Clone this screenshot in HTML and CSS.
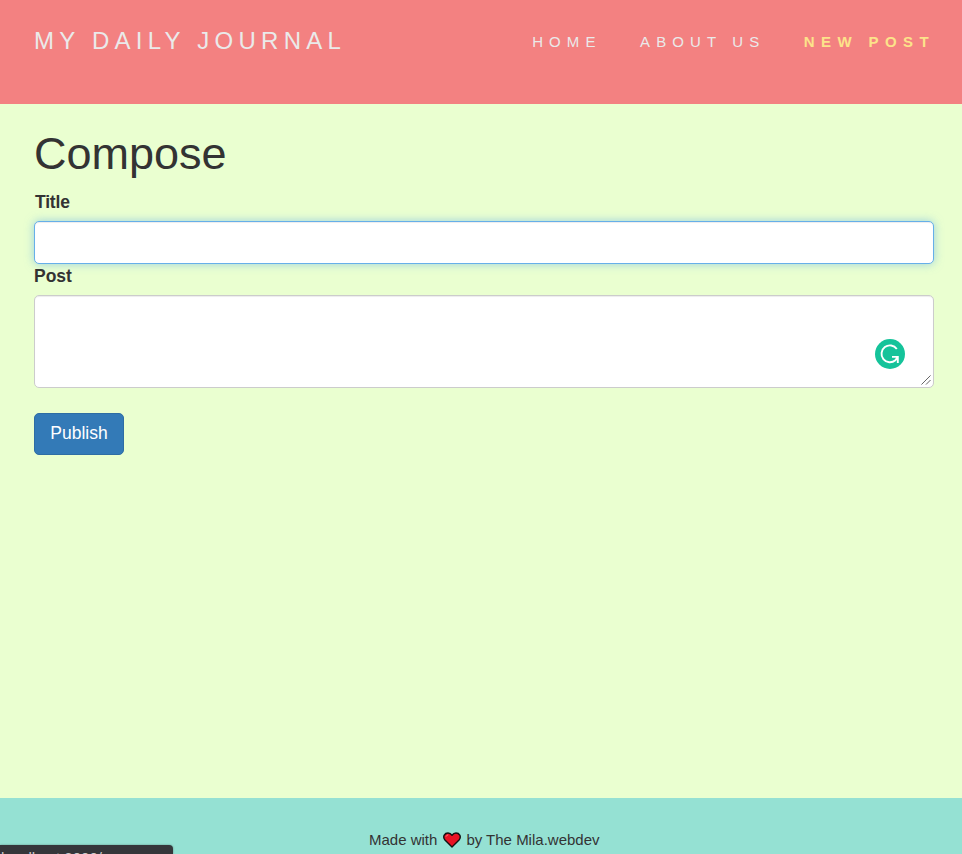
FILE: index.html
```html
<!DOCTYPE html>
<html lang="en">
<head>
<meta charset="utf-8">
<title>Daily Journal</title>
<link rel="stylesheet" href="styles.css">
</head>
<body>
<nav class="navbar">
  <a class="brand">MY DAILY JOURNAL</a>
  <ul class="nav">
    <li><a>HOME</a></li>
    <li><a>ABOUT US</a></li>
    <li class="active"><a>NEW POST</a></li>
  </ul>
</nav>
<main class="container">
  <h1>Compose</h1>
  <form>
    <div class="form-group">
      <label class="label-title" for="title">Title</label>
      <input class="control focused" id="title" type="text">
      <label for="post">Post</label>
      <div class="editor">
        <textarea class="control" id="post"></textarea>
        <svg class="badge" viewBox="0 0 30 30"><circle cx="15" cy="15" r="15" fill="#15c39a"/><path d="M21.8 10A8.4 8.4 0 1 0 20.4 21.2L22.8 18.2M17 17.9H22.8V24" fill="none" stroke="#fff" stroke-width="1.9"/></svg>
        <svg class="grip" viewBox="0 0 11 11"><path d="M.5 10.5L10.5.5M5.5 10.5L10.5 5.5" stroke="#555" stroke-width="1"/></svg>
      </div>
    </div>
    <button class="btn" type="button">Publish</button>
  </form>
</main>
<footer class="footer">
  <p><span class="made">Made with</span><svg class="heart" viewBox="0 0 18 16"><path d="M9 14.9L1.7 7.7C-.6 4.4 1.7 1 5 1Q7.5 1 9 3.3Q10.5 1 13 1C16.3 1 18.6 4.4 16.3 7.7Z" fill="#e81224" stroke="#111" stroke-width="1.4" stroke-linejoin="round"/><path d="M3 4.7Q3.5 3 5.2 2.9" fill="none" stroke="#f77" stroke-width="1"/></svg><span class="author">by The Mila.webdev</span></p>
</footer>
<div class="status">localhost:3000/compose</div>
</body>
</html>
```
FILE: styles.css
```css
* { box-sizing: border-box; }
body {
  margin: 0;
  height: 854px;
  display: flex;
  flex-direction: column;
  overflow: hidden;
  background: #eaffd0;
  color: #333;
  font: 17.5px/25px "Liberation Sans", Arial, sans-serif;
}
.navbar {
  height: 104px;
  padding: 0 27px 0 34px;
  background: #f38181;
  display: flex;
  justify-content: space-between;
  color: #eaeaea;
}
.brand {
  font-size: 24px;
  letter-spacing: 5.25px;
  line-height: 25px;
  padding-top: 28px;
  white-space: nowrap;
}
.nav {
  display: flex;
  gap: 38.5px;
  margin: 0;
  padding: 29px 0 0;
  list-style: none;
  font-size: 15px;
  letter-spacing: 6.1px;
  white-space: nowrap;
}
.active { color: #fce38a; font-weight: bold; letter-spacing: 6.4px; }
.container { flex: 1; padding: 25px 28px 0 34px; }
h1 {
  margin: 0 0 12px;
  font-size: 45px;
  font-weight: normal;
  line-height: 50px;
}
label {
  display: block;
  height: 31px;
  font-weight: bold;
}
.label-title { height: 30px; padding-left: 1px; margin-top: -1px; margin-bottom: 1px; letter-spacing: -.2px; }
.control {
  display: block;
  width: 100%;
  height: 43px;
  margin: 0;
  padding: 7px 15px;
  border: 1px solid #ccc;
  border-radius: 5px;
  background: #fff;
  box-shadow: inset 0 1px 1px rgba(0, 0, 0, .075);
  outline: none;
  font: inherit;
}
.focused {
  border-color: #66afe9;
  box-shadow: inset 0 1px 1px rgba(0, 0, 0, .075), 0 0 10px rgba(102, 175, 233, .6);
}
.editor { position: relative; }
textarea.control { height: 93px; resize: none; }
.badge { position: absolute; right: 29px; top: 44px; width: 30px; height: 30px; }
.grip { position: absolute; right: 3px; bottom: 3px; width: 10px; height: 10px; }
.btn {
  display: block;
  width: 90px;
  height: 42px;
  margin-top: 25px;
  padding: 0 0 2px;
  border: 1px solid #2e6da4;
  border-radius: 5px;
  background: #337ab7;
  color: #fff;
  font: inherit;
}
.footer {
  height: 56px;
  background: #95e1d3;
  font-size: 15px;
}
.footer p {
  display: flex;
  align-items: center;
  margin: 0 0 0 369px;
  padding-top: 29px;
  white-space: nowrap;
}
.heart { width: 18px; height: 16px; margin: 0 5px 0 6px; }
.status {
  position: absolute;
  left: 0;
  top: 845px;
  width: 173px;
  height: 9px;
  padding-left: 1px;
  overflow: hidden;
  border-radius: 0 4px 0 0;
  background: #35363a;
  box-shadow: 0 0 2px rgba(0, 0, 0, .4);
  color: #ccc;
  font-size: 15px;
  line-height: 26px;
}
```
